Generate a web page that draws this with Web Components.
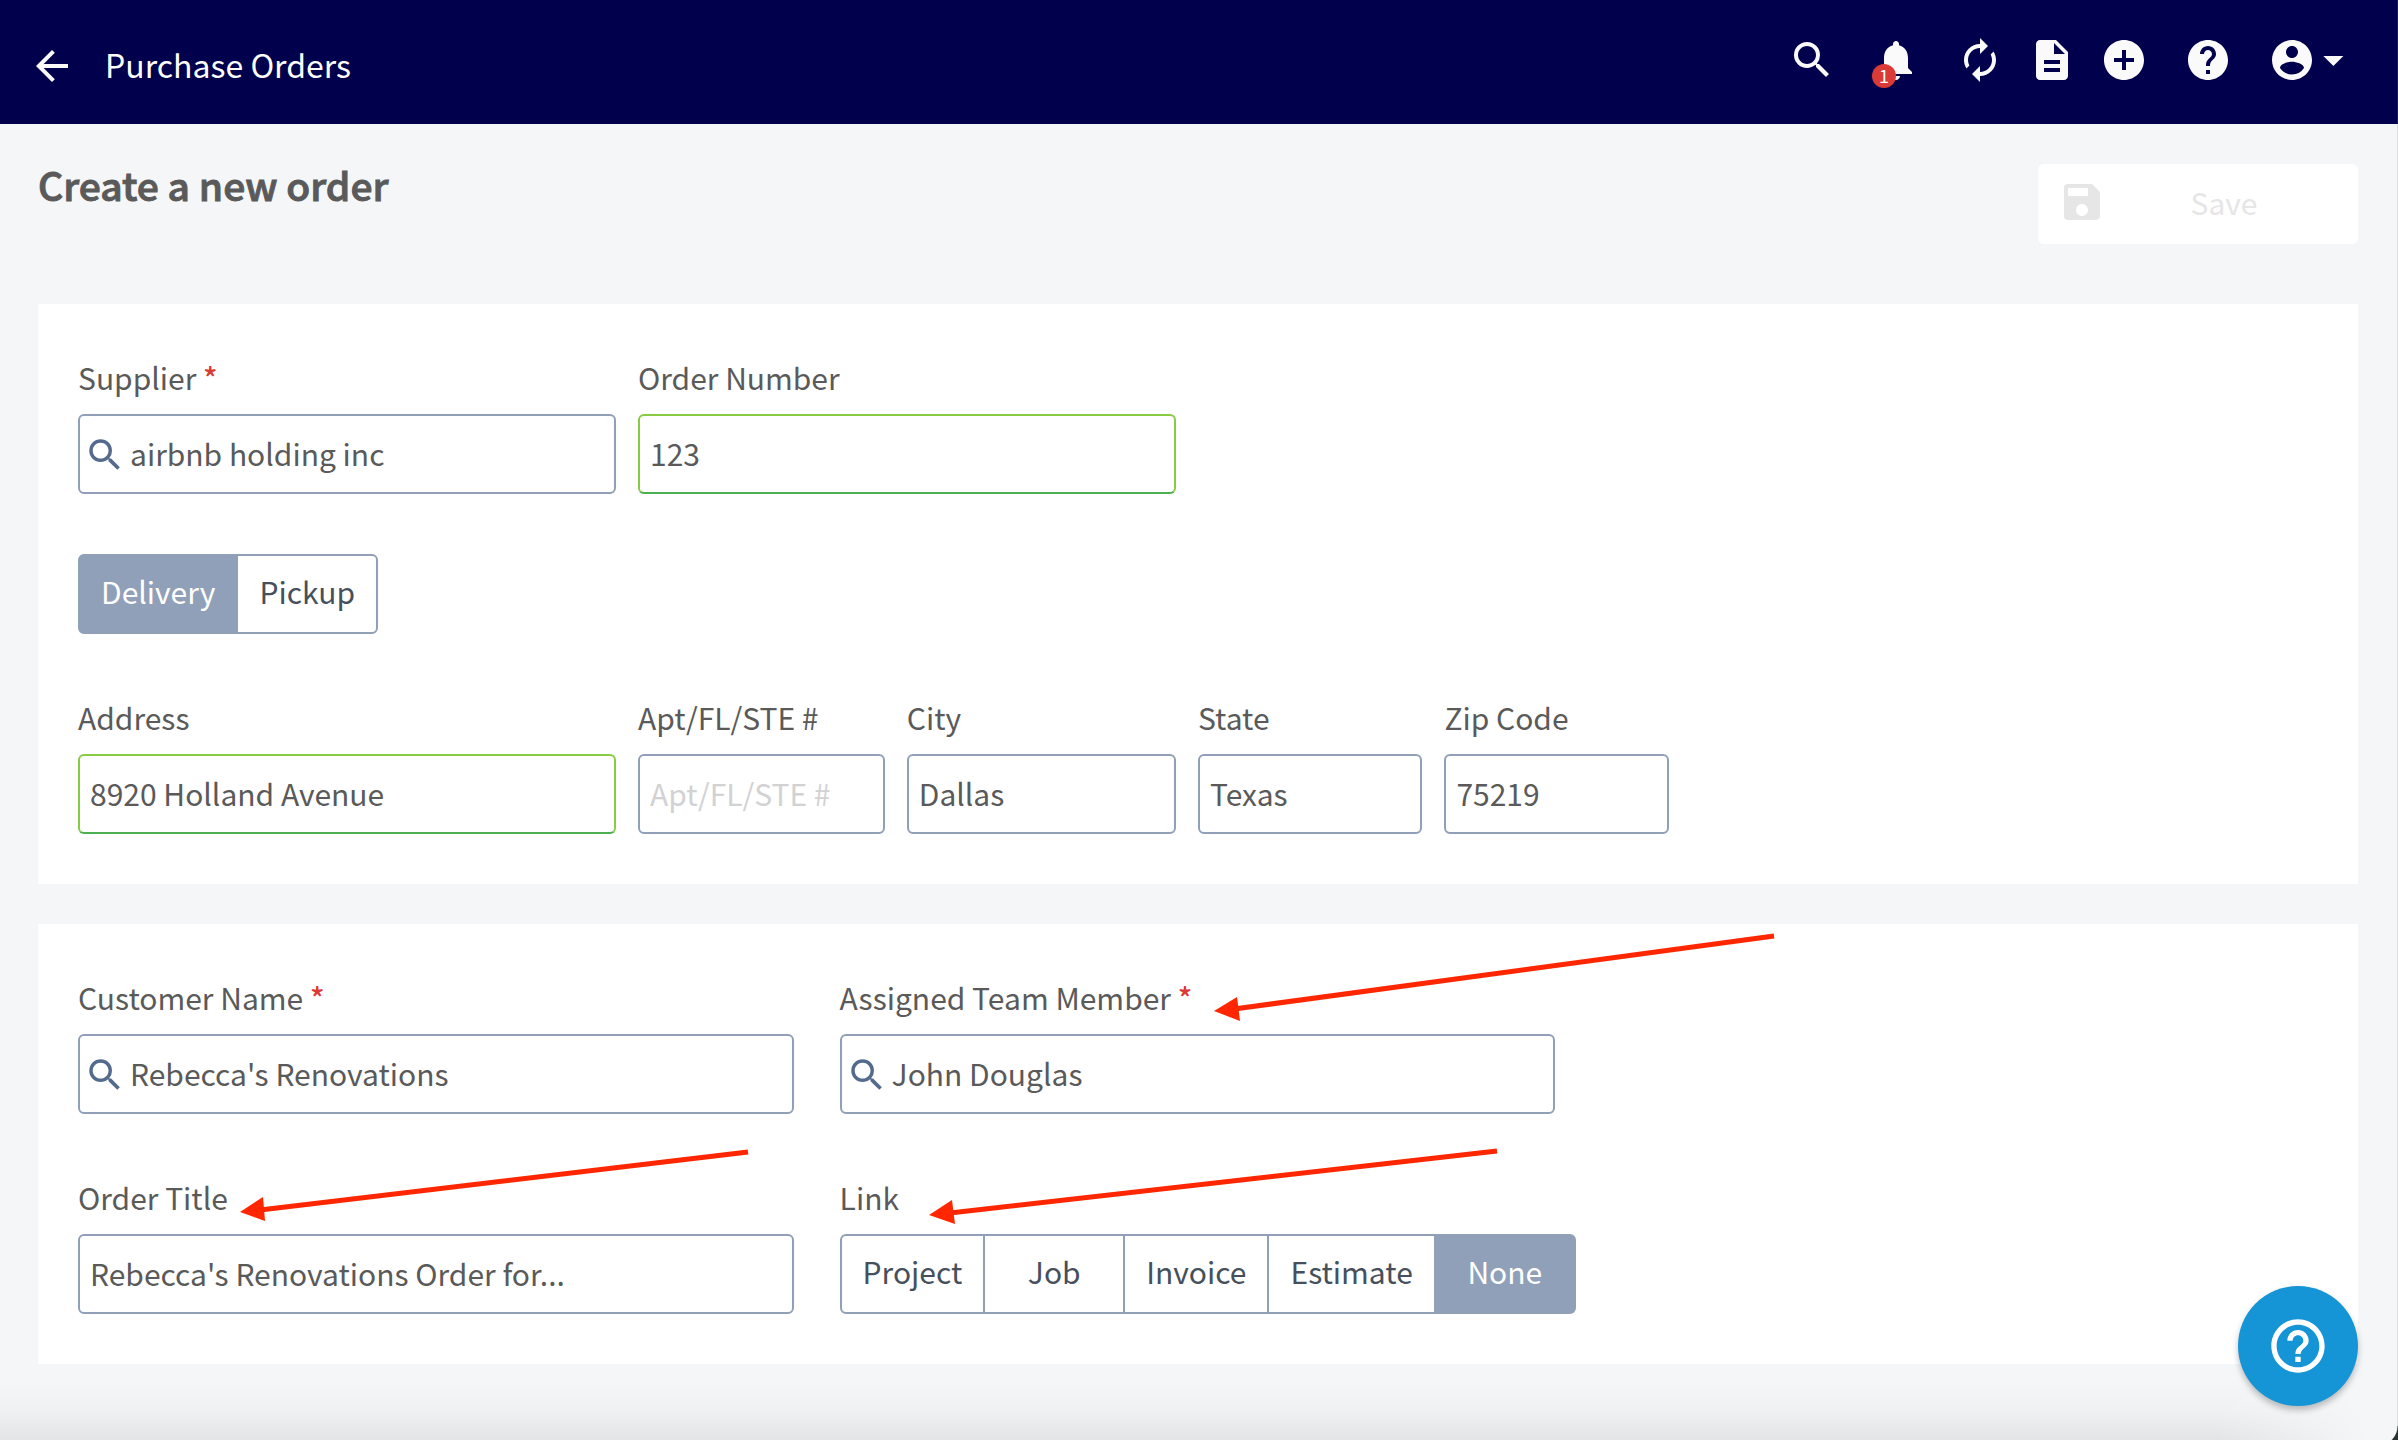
<!DOCTYPE html>
<html lang="en">
<head>
<meta charset="UTF-8">
<meta name="viewport" content="width=device-width, initial-scale=1.0">
<title>Purchase Orders</title>
<style>
  body {
    margin: 0;
    min-height: 100vh;
    background: #f4f6f8;
    color: #5a5a5a;
    font-family: "Noto Sans CJK SC", "Noto Sans", sans-serif;
    font-size: 30px;
    line-height: 46px;
  }
</style>
</head>
<body>
  <order-page></order-page>

<script>
  const icons = {
    back: '<path d="M20 11H7.83l5.59-5.59L12 4l-8 8 8 8 1.41-1.41L7.83 13H20v-2z"/>',
    search: '<path d="M15.5 14h-.79l-.28-.27A6.47 6.47 0 0 0 16 9.5 6.5 6.5 0 1 0 9.5 16c1.61 0 3.09-.59 4.23-1.57l.27.28v.79l5 4.99L20.49 19l-4.99-5zm-6 0C7.01 14 5 11.99 5 9.5S7.01 5 9.5 5 14 7.01 14 9.5 11.99 14 9.5 14z"/>',
    bell: '<path d="M12 22c1.1 0 2-.9 2-2h-4c0 1.1.89 2 2 2zm6-6v-5c0-3.07-1.64-5.64-4.5-6.32V4c0-.83-.67-1.5-1.5-1.5s-1.5.67-1.5 1.5v.68C7.63 5.36 6 7.92 6 11v5l-2 2v1h16v-1l-2-2z"/>',
    refresh: '<path d="M12 6v3l4-4-4-4v3c-4.42 0-8 3.58-8 8 0 1.57.46 3.03 1.24 4.26L6.7 14.8A5.87 5.87 0 0 1 6 12c0-3.31 2.69-6 6-6zm6.76 1.74L17.3 9.2c.44.84.7 1.79.7 2.8 0 3.31-2.69 6-6 6v-3l-4 4 4 4v-3c4.42 0 8-3.58 8-8 0-1.57-.46-3.03-1.24-4.26z"/>',
    document: '<path d="M14 2H6c-1.1 0-1.99.9-1.99 2L4 20c0 1.1.89 2 1.99 2H18c1.1 0 2-.9 2-2V8l-6-6zm2 16H8v-2h8v2zm0-4H8v-2h8v2zm-3-5V3.5L18.5 9H13z"/>',
    add: '<path d="M12 2C6.48 2 2 6.48 2 12s4.48 10 10 10 10-4.48 10-10S17.52 2 12 2zm5 11h-4v4h-2v-4H7v-2h4V7h2v4h4v2z"/>',
    help: '<path d="M12 2C6.48 2 2 6.48 2 12s4.48 10 10 10 10-4.48 10-10S17.52 2 12 2zm1 17h-2v-2h2v2zm2.07-7.75l-.9.92C13.45 12.9 13 13.5 13 15h-2v-.5c0-1.1.45-2.1 1.17-2.83l1.24-1.26c.37-.36.59-.86.59-1.41 0-1.1-.9-2-2-2s-2 .9-2 2H8c0-2.21 1.79-4 4-4s4 1.79 4 4c0 .88-.36 1.68-.93 2.25z"/>',
    helpOutline: '<path d="M11 18h2v-2h-2v2zm1-16C6.48 2 2 6.48 2 12s4.48 10 10 10 10-4.48 10-10S17.52 2 12 2zm0 18c-4.41 0-8-3.59-8-8s3.59-8 8-8 8 3.59 8 8-3.59 8-8 8zm0-14c-2.21 0-4 1.79-4 4h2c0-1.1.9-2 2-2s2 .9 2 2c0 2-3 1.75-3 5h2c0-2.25 3-2.5 3-5 0-2.21-1.79-4-4-4z"/>',
    account: '<path d="M12 2C6.48 2 2 6.48 2 12s4.48 10 10 10 10-4.48 10-10S17.52 2 12 2zm0 3c1.66 0 3 1.34 3 3s-1.34 3-3 3-3-1.34-3-3 1.34-3 3-3zm0 14.2a7.2 7.2 0 0 1-6-3.22c.03-1.99 4-3.08 6-3.08 1.99 0 5.97 1.09 6 3.08a7.2 7.2 0 0 1-6 3.22z"/><path d="M27.7 10l5 5 5-5z"/>',
    save: '<path d="M17 3H5a2 2 0 0 0-2 2v14a2 2 0 0 0 2 2h14c1.1 0 2-.9 2-2V7l-4-4zm-5 16c-1.66 0-3-1.34-3-3s1.34-3 3-3 3 1.34 3 3-1.34 3-3 3zm3-10H5V5h10v4z"/>'
  };

  // <app-icon name="search"></app-icon>, sized with --icon-size
  class AppIcon extends HTMLElement {
    constructor() {
      super();
      this.attachShadow({ mode: 'open' });
    }

    connectedCallback() {
      const name = this.getAttribute('name');
      // the account icon carries its drop-down caret on the right
      const viewBox = name === 'account' ? '0 0 45 24' : '0 0 24 24';
      this.shadowRoot.innerHTML = `
        <style>
          :host { display: block; flex: none; }
          svg {
            display: block;
            height: var(--icon-size, 48px);
            fill: currentColor;
          }
        </style>
        <svg viewBox="${viewBox}" aria-hidden="true">${icons[name]}</svg>
      `;
    }
  }
  customElements.define('app-icon', AppIcon);

  class AppHeader extends HTMLElement {
    constructor() {
      super();
      const shadow = this.attachShadow({ mode: 'open' });
      shadow.innerHTML = `
        <style>
          :host { display: block; }
          header {
            display: flex;
            align-items: center;
            justify-content: space-between;
            height: 124px;
            padding: 0 40px 0 28px;
            box-sizing: border-box;
            background: #00004d;
            color: #fafafa;
          }
          .title {
            display: flex;
            align-items: center;
            gap: 29px;
            padding-top: 8px;
          }
          h1 {
            margin: 0;
            padding-bottom: 4px;
            font-size: 32px;
            line-height: 44px;
            font-weight: 400;
            color: #fff;
          }
          nav {
            display: flex;
            align-items: center;
            gap: 36px;
            padding-bottom: 4px;
          }
          .group { display: flex; gap: 24px; }
          button {
            position: relative;
            padding: 0;
            border: none;
            background: none;
            color: inherit;
            font: inherit;
            cursor: pointer;
          }
          .badge {
            position: absolute;
            left: 0;
            bottom: -4px;
            width: 24px;
            height: 24px;
            border-radius: 50%;
            background: #db3b36;
            color: #fff;
            font-size: 18px;
            line-height: 22px;
            text-align: center;
          }
        </style>
        <header>
          <div class="title">
            <button aria-label="Back"><app-icon name="back"></app-icon></button>
            <h1><slot></slot></h1>
          </div>
          <nav>
            <button aria-label="Search"><app-icon name="search"></app-icon></button>
            <button aria-label="Notifications"><app-icon name="bell"></app-icon><span class="badge">1</span></button>
            <div class="group">
              <button aria-label="Refresh"><app-icon name="refresh"></app-icon></button>
              <button aria-label="Documents"><app-icon name="document"></app-icon></button>
              <button aria-label="Add"><app-icon name="add"></app-icon></button>
            </div>
            <button aria-label="Help"><app-icon name="help"></app-icon></button>
            <button aria-label="Account"><app-icon name="account"></app-icon></button>
          </nav>
        </header>
      `;
    }
  }
  customElements.define('app-header', AppHeader);

  class FormField extends HTMLElement {
    constructor() {
      super();
      this.attachShadow({ mode: 'open' });
    }

    get label() {
      return this.getAttribute('label');
    }

    get value() {
      return this.getAttribute('value') || '';
    }

    get placeholder() {
      return this.getAttribute('placeholder') || '';
    }

    connectedCallback() {
      const star = this.hasAttribute('required') ? ' <span class="star">*</span>' : '';
      const icon = this.hasAttribute('search') ? '<app-icon name="search"></app-icon>' : '';
      this.shadowRoot.innerHTML = `
        <style>
          :host { display: block; min-width: 0; }
          label {
            display: block;
            padding-bottom: 14px;
            white-space: nowrap;
          }
          .star { color: #db3b36; font-weight: 500; }
          .box {
            display: flex;
            align-items: center;
            height: 80px;
            padding: 0 10px;
            box-sizing: border-box;
            border: 2px solid #90a0b8;
            border-radius: 6px;
            background: #fff;
          }
          :host([search]) .box { padding-left: 4px; }
          :host([valid]) .box {
            border-color: #88cc44;
            border-bottom-color: #4caf50;
          }
          app-icon {
            --icon-size: 42px;
            margin: 2px 4px 0 0;
            color: #556b8d;
          }
          input {
            flex: 1;
            min-width: 0;
            height: 46px;
            padding: 0 0 2px;
            border: none;
            outline: none;
            background: none;
            color: inherit;
            font: inherit;
          }
          input::placeholder { color: #d2d2d2; opacity: 1; }
        </style>
        <label for="input">${this.label}${star}</label>
        <div class="box">
          ${icon}
          <input id="input" type="text" value="${this.value}" placeholder="${this.placeholder}">
        </div>
      `;
    }
  }
  customElements.define('form-field', FormField);

  // Row of joined buttons, one of them selected
  class ButtonGroup extends HTMLElement {
    constructor() {
      super();
      this.attachShadow({ mode: 'open' });
    }

    connectedCallback() {
      const label = this.getAttribute('label');
      const selected = this.getAttribute('selected');
      const buttons = this.getAttribute('options').split(',').map((option) =>
        `<button aria-pressed="${option === selected}">${option}</button>`
      ).join('');

      this.shadowRoot.innerHTML = `
        <style>
          :host { display: block; }
          .label { padding-bottom: 14px; }
          .group { display: flex; }
          button {
            flex: none;
            min-width: 142px;
            height: 80px;
            padding: 0 21px 6px;
            border: 2px solid #90a0b8;
            background: #fff;
            color: #46505c;
            font: inherit;
            cursor: pointer;
          }
          button + button { margin-left: -2px; }
          button:first-child { border-radius: 6px 0 0 6px; }
          button:last-child { border-radius: 0 6px 6px 0; }
          button[aria-pressed="true"] {
            background: #90a0b8;
            color: #fff;
          }
        </style>
        ${label ? `<div class="label" id="label">${label}</div>` : ''}
        <div class="group" role="group" ${label ? 'aria-labelledby="label"' : 'aria-label="Shipping"'}>${buttons}</div>
      `;

      this.shadowRoot.querySelectorAll('button').forEach((button) => {
        button.addEventListener('click', () => this.select(button));
      });
    }

    select(target) {
      this.shadowRoot.querySelectorAll('button').forEach((button) => {
        button.setAttribute('aria-pressed', button === target);
      });
    }
  }
  customElements.define('button-group', ButtonGroup);

  class FormPanel extends HTMLElement {
    constructor() {
      super();
      const shadow = this.attachShadow({ mode: 'open' });
      shadow.innerHTML = `
        <style>
          :host {
            display: flex;
            flex-direction: column;
            gap: 60px;
            position: relative;
            padding: 50px 40px;
            background: #fff;
          }
        </style>
        <slot></slot>
      `;
    }
  }
  customElements.define('form-panel', FormPanel);

  // Red pointers drawn over the panel
  class PanelArrows extends HTMLElement {
    constructor() {
      super();
      const shadow = this.attachShadow({ mode: 'open' });
      shadow.innerHTML = `
        <style>
          :host {
            position: absolute;
            inset: 0;
            pointer-events: none;
          }
          svg { display: block; width: 100%; height: 100%; }
          line { stroke: #ff2600; stroke-width: 5; }
          polygon { fill: #ff2600; }
        </style>
        <svg aria-hidden="true">
          <line x1="1736" y1="12" x2="1196" y2="85"/>
          <polygon points="1176,87 1199,73 1202,97"/>
          <line x1="710" y1="228" x2="222" y2="286"/>
          <polygon points="202,288 225,273 227,297"/>
          <line x1="1459" y1="227" x2="912" y2="289"/>
          <polygon points="891,291 914,276 917,300"/>
        </svg>
      `;
    }
  }
  customElements.define('panel-arrows', PanelArrows);

  // Shade along the bottom of the window and its rounded corner
  class WindowEdge extends HTMLElement {
    constructor() {
      super();
      const shadow = this.attachShadow({ mode: 'open' });
      shadow.innerHTML = `
        <style>
          :host {
            position: fixed;
            inset: 0;
            border-right: 1px solid rgba(128, 128, 128, .2);
            pointer-events: none;
          }
          .shade {
            position: absolute;
            left: 0;
            right: 0;
            bottom: 0;
            height: 60px;
            background: linear-gradient(rgba(0, 0, 0, 0), rgba(0, 0, 0, .02) 50%, rgba(0, 0, 0, .07));
            mask-image: linear-gradient(to left, transparent 30px, #000 180px);
          }
          .corner {
            position: absolute;
            right: -1px;
            bottom: 0;
            width: 20px;
            height: 14px;
            background: radial-gradient(circle at 0 0, transparent 19px, #26332f 20px);
          }
        </style>
        <div class="shade"></div>
        <div class="corner"></div>
      `;
    }
  }
  customElements.define('window-edge', WindowEdge);

  class HelpButton extends HTMLElement {
    constructor() {
      super();
      const shadow = this.attachShadow({ mode: 'open' });
      shadow.innerHTML = `
        <style>
          :host {
            position: fixed;
            right: 40px;
            bottom: 34px;
          }
          button {
            display: flex;
            align-items: center;
            justify-content: center;
            width: 120px;
            height: 120px;
            padding: 0;
            border: none;
            border-radius: 50%;
            background: #1594d6;
            color: #fff;
            box-shadow: 0 4px 6px rgba(0, 0, 0, .25);
            cursor: pointer;
          }
          app-icon { --icon-size: 64px; }
        </style>
        <button aria-label="Open help"><app-icon name="helpOutline"></app-icon></button>
      `;
    }
  }
  customElements.define('help-button', HelpButton);

  class OrderPage extends HTMLElement {
    constructor() {
      super();
      const shadow = this.attachShadow({ mode: 'open' });
      shadow.innerHTML = `
        <style>
          :host { display: block; }
          main {
            display: flex;
            flex-direction: column;
            gap: 40px;
            padding: 40px 40px 76px 38px;
          }
          .top {
            display: flex;
            justify-content: space-between;
            align-items: flex-start;
            padding-bottom: 20px;
          }
          h2 {
            margin: 0;
            font-size: 39px;
            line-height: 40px;
            font-weight: 500;
            -webkit-text-stroke: 1px currentColor;
          }
          .save {
            display: flex;
            align-items: center;
            width: 320px;
            height: 80px;
            padding: 0 20px 4px;
            border: none;
            border-radius: 6px;
            background: #fff;
            color: #e6e6e6;
            font: inherit;
          }
          .save span { flex: 1; padding-left: 4px; }
          .row { display: grid; }
          .row > * { margin-right: 22px; }
          .order { grid-template-columns: 25% 25%; }
          .address { grid-template-columns: 25% 12% 13% 11% 11%; }
          .half { grid-template-columns: 34% 34%; }
          .half > * { margin-right: 46px; }
        </style>
        <app-header>Purchase Orders</app-header>
        <main>
          <div class="top">
            <h2>Create a new order</h2>
            <button class="save" disabled><app-icon name="save"></app-icon><span>Save</span></button>
          </div>
          <form-panel>
            <div class="row order">
              <form-field label="Supplier" value="airbnb holding inc" required search></form-field>
              <form-field label="Order Number" value="123" valid></form-field>
            </div>
            <button-group options="Delivery,Pickup" selected="Delivery"></button-group>
            <div class="row address">
              <form-field label="Address" value="8920 Holland Avenue" valid></form-field>
              <form-field label="Apt/FL/STE #" placeholder="Apt/FL/STE #"></form-field>
              <form-field label="City" value="Dallas"></form-field>
              <form-field label="State" value="Texas"></form-field>
              <form-field label="Zip Code" value="75219"></form-field>
            </div>
          </form-panel>
          <form-panel>
            <div class="row half">
              <form-field label="Customer Name" value="Rebecca's Renovations" required search></form-field>
              <form-field label="Assigned Team Member" value="John Douglas" required search></form-field>
            </div>
            <div class="row half">
              <form-field label="Order Title" value="Rebecca's Renovations Order for..."></form-field>
              <button-group label="Link" options="Project,Job,Invoice,Estimate,None" selected="None"></button-group>
            </div>
            <panel-arrows></panel-arrows>
          </form-panel>
        </main>
        <window-edge></window-edge>
        <help-button></help-button>
      `;
    }
  }
  customElements.define('order-page', OrderPage);
</script>
</body>
</html>
